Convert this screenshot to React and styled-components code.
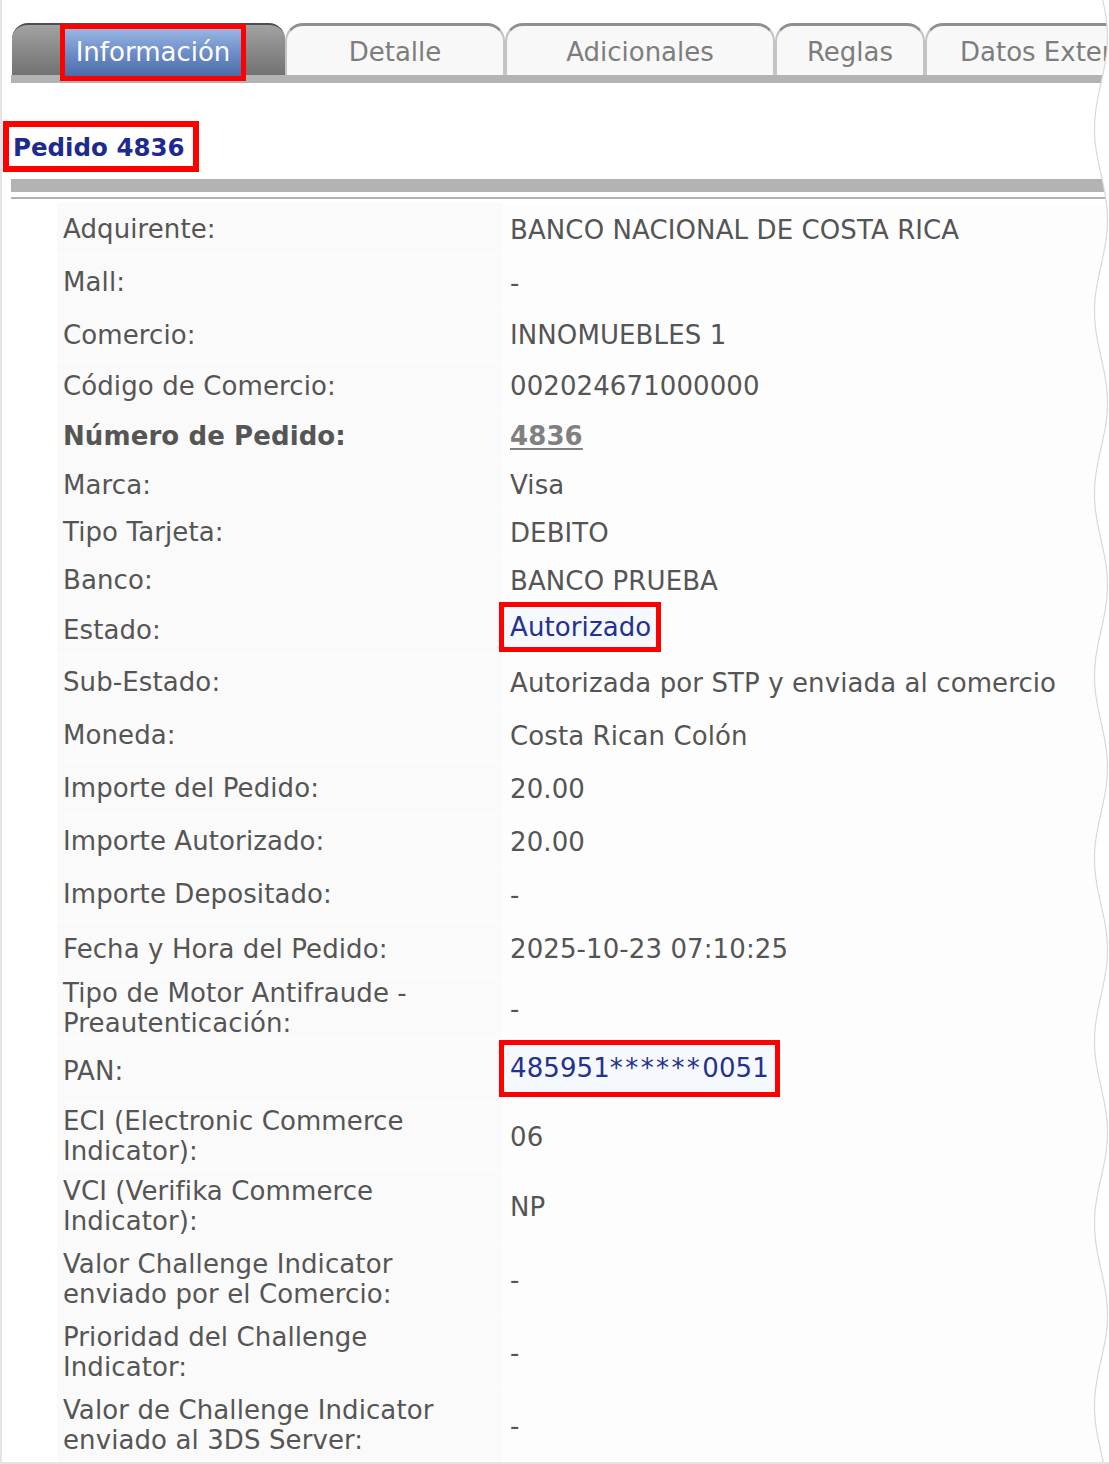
import React from 'react';
import styled, { createGlobalStyle } from 'styled-components';

const GlobalStyle = createGlobalStyle`
  body {
    margin: 0;
    background: #fff;
    font-family: "DejaVu Sans", Verdana, sans-serif;
  }
`;

const Page = styled.div`
  position: relative;
  width: 1109px;
  height: 1464px;
  box-sizing: border-box;
  overflow: hidden;
  border-left: 2px solid #e4e4e4;
  border-bottom: 2px solid #e4e4e4;
  background: #fff;
`;

// tab strip
const TabBar = styled.div`
  display: flex;
  height: 52px;
  margin: 23px 0 0 10px;
  width: 1300px;
`;

const ActiveTab = styled.div`
  flex: 0 0 273px;
  box-sizing: border-box;
  border-top: 2px solid #4e4e4e;
  border-radius: 16px 16px 0 0;
  background: linear-gradient(to bottom, #a2a2a2, #8c8c8c 45%, #727272);
  padding-left: 48px;
`;

const ActiveLabel = styled.div`
  position: relative;
  z-index: 1;
  box-sizing: border-box;
  width: 186px;
  height: 57px;
  margin-top: -1px;
  border: 5px solid #ff0000;
  background: linear-gradient(to bottom, #98b6e2, #6d8ec8 50%, #4c6ba7);
  color: #fff;
  font-size: 26px;
  line-height: 46px;
  text-align: center;
`;

const Tab = styled.div`
  flex: 0 0 ${p => p.$w}px;
  box-sizing: border-box;
  border-top: 3px solid #8f8f8f;
  border-left: 2px solid #c4c4c4;
  border-right: 2px solid #c4c4c4;
  border-radius: 18px 18px 0 0;
  background: #f8f8f8;
  color: #7d7d7d;
  font-size: 26px;
  line-height: 30px;
  padding-top: 11px;
  text-align: ${p => (p.$pad ? 'left' : 'center')};
  padding-left: ${p => p.$pad || 0}px;
  white-space: nowrap;
`;

const Rule = styled.div`
  height: ${p => p.$h}px;
  margin: ${p => p.$top || 0}px 0 0 9px;
  background: #b3b3b3;
`;

const TitleBox = styled.h2`
  display: inline-block;
  box-sizing: border-box;
  margin: 38px 0 0 1px;
  height: 51px;
  border: 6px solid #ff0000;
  padding: 0 8px 0 4px;
  color: #1d2a8e;
  font-size: 24.5px;
  font-weight: bold;
  line-height: 41px;
  vertical-align: top;
`;

const Table = styled.div`
  display: flex;
  flex-direction: column;
  margin: 4px 0 0 55px;
`;

const Row = styled.div`
  display: grid;
  grid-template-columns: 445px 1fr;
  height: ${p => p.$h}px;
  font-size: 26px;
  letter-spacing: 0.1px;
  line-height: 30px;
  color: #555;
`;

const Label = styled.div`
  display: flex;
  align-items: center;
  box-sizing: border-box;
  padding: 0 40px 0 6px;
  background: #fafafa;
  border-bottom: 1px solid #fdfdfd;
  font-weight: ${p => (p.$bold ? 'bold' : 'normal')};
`;

const Value = styled.div`
  display: flex;
  align-items: center;
  padding-left: 8px;
  background: #fdfdfd;
  white-space: nowrap;
`;

const OrderLink = styled.span`
  color: #808080;
  font-weight: bold;
  text-decoration: underline;
  text-underline-offset: 3px;
`;

const Marked = styled.span`
  display: inline-block;
  box-sizing: border-box;
  height: ${p => p.$h}px;
  margin: -${p => p.$lift * 2}px 0 0 -11px;
  border: 5px solid #ff0000;
  padding: 0 ${p => p.$right}px 0 6px;
  background: #f5f8fd;
  color: #243190;
  line-height: ${p => p.$h - 10}px;
`;

const Stars = styled.span`
  letter-spacing: 2.4px;
`;

const Torn = styled.svg`
  position: absolute;
  top: 0;
  right: 0;
  width: 23px;
  height: 1462px;
`;

const tabs = [
  { name: 'Detalle', w: 220 },
  { name: 'Adicionales', w: 270 },
  { name: 'Reglas', w: 150 },
  { name: 'Datos Externos', w: 280, pad: 33 },
];

const rows = [
  ['Adquirente:', 'BANCO NACIONAL DE COSTA RICA', 53],
  ['Mall:', '-', 53],
  ['Comercio:', 'INNOMUEBLES 1', 52],
  ['Código de Comercio:', '002024671000000', 50],
  ['Número de Pedido:', '4836', 50, 'order'],
  ['Marca:', 'Visa', 48],
  ['Tipo Tarjeta:', 'DEBITO', 47],
  ['Banco:', 'BANCO PRUEBA', 49],
  ['Estado:', 'Autorizado', 51, 'estado'],
  ['Sub-Estado:', 'Autorizada por STP y enviada al comercio', 53],
  ['Moneda:', 'Costa Rican Colón', 53],
  ['Importe del Pedido:', '20.00', 53],
  ['Importe Autorizado:', '20.00', 53],
  ['Importe Depositado:', '-', 53],
  ['Fecha y Hora del Pedido:', '2025-10-23 07:10:25', 56],
  ['Tipo de Motor Antifraude - Preautenticación:', '-', 63],
  ['PAN:', '', 63, 'pan'],
  ['ECI (Electronic Commerce Indicator):', '06', 67],
  ['VCI (Verifika Commerce Indicator):', 'NP', 73],
  ['Valor Challenge Indicator enviado por el Comercio:', '-', 73],
  ['Prioridad del Challenge Indicator:', '-', 73],
  ['Valor de Challenge Indicator enviado al 3DS Server:', '-', 73],
];

// wavy "torn" right edge of the capture
const wave = Array.from({ length: 367 }, (_, i) => {
  const y = i * 4;
  const x = 15 + 6.5 * Math.cos((2 * Math.PI * (y - 220)) / 182.5);
  return `${x.toFixed(1)},${y}`;
});

function renderValue(value, kind) {
  if (kind === 'order') return <OrderLink>{value}</OrderLink>;
  if (kind === 'estado') return <Marked $h={50} $right={5} $lift={4}>{value}</Marked>;
  if (kind === 'pan') {
    return (
      <Marked $h={57} $right={6} $lift={3}>
        485951<Stars>******</Stars>0051
      </Marked>
    );
  }
  return value;
}

export default function App() {
  return (
    <>
      <GlobalStyle />
      <Page>
        <TabBar>
          <ActiveTab>
            <ActiveLabel>Información</ActiveLabel>
          </ActiveTab>
          {tabs.map(t => (
            <Tab key={t.name} $w={t.w} $pad={t.pad}>{t.name}</Tab>
          ))}
        </TabBar>
        <Rule $h={8} />

        <TitleBox>Pedido 4836</TitleBox>
        <Rule $h={13} $top={7} />
        <Rule $h={2} $top={5} />

        <Table>
          {rows.map(([label, value, h, kind]) => (
            <Row key={label} $h={h}>
              <Label $bold={kind === 'order'}>{label}</Label>
              <Value>{renderValue(value, kind)}</Value>
            </Row>
          ))}
        </Table>

        <Torn viewBox="0 0 23 1462" preserveAspectRatio="none">
          <polygon points={`${wave.join(' ')} 23,1464 23,0`} fill="#fff" />
          <polyline points={wave.join(' ')} fill="none" stroke="#d8d8d8" strokeWidth="1.2" />
        </Torn>
      </Page>
    </>
  );
}
